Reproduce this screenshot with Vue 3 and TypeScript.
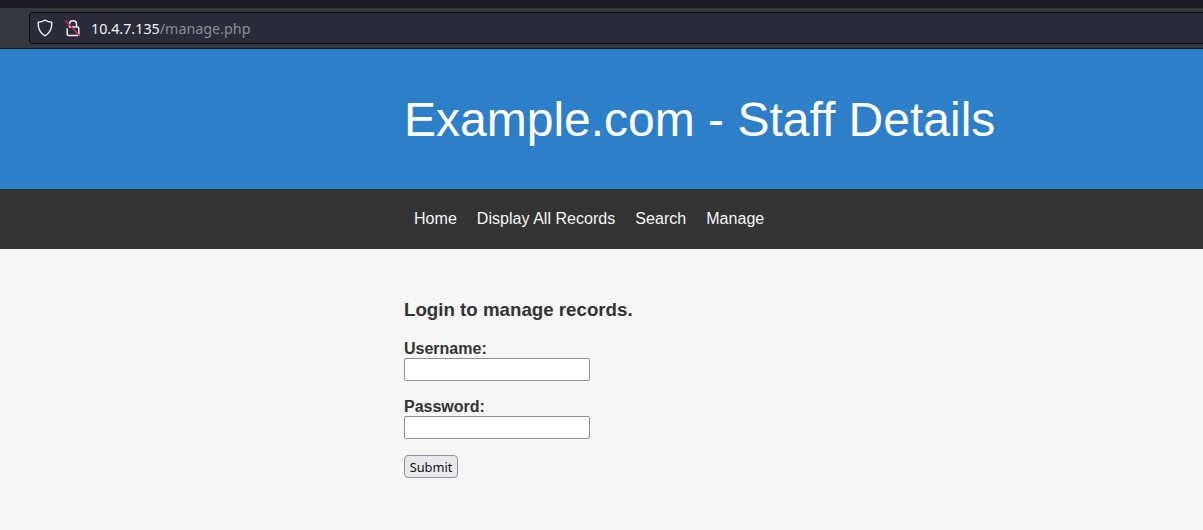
<script setup lang="ts">
const links: string[] = ['Home', 'Display All Records', 'Search', 'Manage']
</script>

<template>
  <div class="page">
    <div class="tabstrip"></div>
    <div class="toolbar">
      <div class="urlbar">
        <svg class="shield" width="16" height="18" viewBox="0 0 16 18" fill="none">
          <path d="M8 1.200 C5.800 2.600 3.600 3.200 1.200 3.300 C1 9 2.600 14 8 16.800 C13.400 14 15 9 14.800 3.300 C12.400 3.200 10.200 2.600 8 1.200 Z" stroke="#e8e8ea" stroke-width="1.400" stroke-linejoin="round" />
        </svg>
        <svg class="lock" width="16" height="18" viewBox="0 0 16 18" fill="none">
          <path d="M4.500 8V5.200C4.500 3.200 6 1.800 8 1.800S11.500 3.200 11.500 5.200V8" stroke="#ececee" stroke-width="1.500" />
          <path d="M4 8H12.500C13.300 8 13.800 8.500 13.800 9.300V15.200C13.800 16 13.300 16.500 12.500 16.500H3.500C2.700 16.500 2.200 16 2.200 15.200V9.300" stroke="#ececee" stroke-width="1.500" />
          <path d="M0.500 1.500 L14.500 16.800" stroke="#e22850" stroke-width="1.500" />
        </svg>
        <span class="url"><span class="host">10.4.7.135</span><span class="path">/manage.php</span></span>
      </div>
    </div>
    <header class="banner">
      <h1>Example.com - Staff Details</h1>
    </header>
    <nav class="menu">
      <a v-for="link in links" :key="link" class="menu-link">{{ link }}</a>
    </nav>
    <main class="content">
      <h3>Login to manage records.</h3>
      <form class="login" @submit.prevent>
        <div class="field">
          <label for="username">Username:</label>
          <input id="username" type="text" />
        </div>
        <div class="field">
          <label for="password">Password:</label>
          <input id="password" type="password" />
        </div>
        <button type="submit">Submit</button>
      </form>
    </main>
  </div>
</template>

<style>
html, body { margin: 0; background: #f6f6f6; overflow: hidden; }
</style>

<style scoped>
.page {
  height: 530px;
  display: flex;
  flex-direction: column;
  font-family: "Liberation Sans", Arial, sans-serif;
  background: #f6f6f6;
  color: #333;
  overflow: hidden;
}
.tabstrip { height: 8px; background: #1c1b22; flex: none; }
.toolbar {
  height: 41px;
  flex: none;
  box-sizing: border-box;
  padding: 4px 0 4px 29px;
  background: #34363c;
  border-bottom: 1px solid #0f0f14;
  display: flex;
}
.urlbar {
  flex: 1;
  box-sizing: border-box;
  border: 1px solid #0f0f14;
  border-right: none;
  border-radius: 4px 0 0 4px;
  background: #2a2b38;
  display: flex;
  align-items: center;
  padding-left: 7px;
}
.shield { flex: none; }
.lock { flex: none; margin-left: 12px; }
.url {
  margin-left: 10px;
  font-family: "Noto Sans", "Open Sans", sans-serif;
  font-size: 14.300px;
  white-space: nowrap;
}
.host { color: #f4f4f6; }
.path { color: #8b8b93; }
.banner {
  height: 140px;
  flex: none;
  box-sizing: border-box;
  background: #2d7fca;
  padding: 42px 0 0 404px;
}
.banner h1 {
  margin: 0;
  color: #fff;
  font-size: 48px;
  font-weight: 400;
  line-height: 58px;
}
.menu {
  height: 60px;
  flex: none;
  background: #333;
  display: flex;
  align-items: center;
  padding-left: 404px;
  box-sizing: border-box;
}
.menu-link {
  color: #f6f6f6;
  font-size: 16px;
  padding: 0 10px;
  letter-spacing: 0.035px;
}
.content { padding: 50px 0 0 404px; }
.content h3 {
  margin: 0 0 20px;
  font-size: 18.720px;
  line-height: 21px;
  font-weight: 700;
}
.field { display: flex; flex-direction: column; align-items: flex-start; margin-bottom: 17px; }
.field:last-of-type { margin-bottom: 16px; }
.field label { font-size: 16px; font-weight: 700; line-height: 18px; }
.field input {
  width: 186px;
  height: 23px;
  box-sizing: border-box;
  margin: 0;
  padding: 1px 2px;
  border: 1px solid #8f8f9d;
  border-radius: 2px;
  background: #fff;
}
button {
  display: block;
  width: 54px;
  height: 23px;
  box-sizing: border-box;
  margin: 0;
  padding: 0;
  font-family: "Noto Sans", sans-serif;
  font-size: 12.800px;
  color: #111;
  background: #e9e9ed;
  border: 1px solid #8f8f9d;
  border-radius: 4px;
}
</style>
